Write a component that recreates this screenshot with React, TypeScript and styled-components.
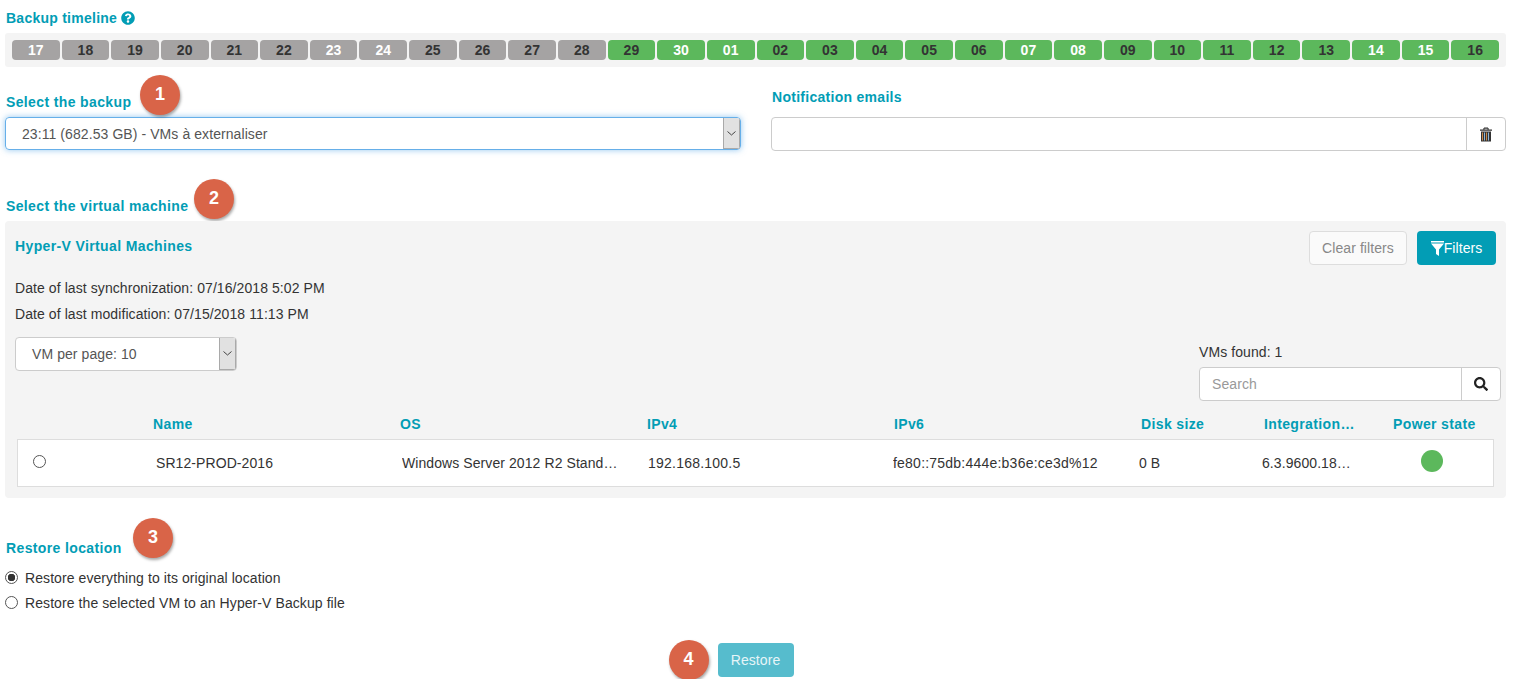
import styled, { createGlobalStyle } from 'styled-components';
import { FaQuestionCircle, FaSearch } from 'react-icons/fa';

const teal = '#029db5';
const days = [
  '17', '18', '19', '20', '21', '22', '23', '24', '25', '26', '27', '28', '29', '30', '01',
  '02', '03', '04', '05', '06', '07', '08', '09', '10', '11', '12', '13', '14', '15', '16',
];
const weekend = ['17', '23', '24', '30', '01', '07', '08', '14', '15'];
const firstGreen = 12;

const GlobalStyle = createGlobalStyle`
  html, body {
    margin: 0;
    background: #fff;
  }
  body {
    font-family: "Liberation Sans", Arial, sans-serif;
    font-size: 14px;
    letter-spacing: 0.08px;
    color: #333;
  }
`;

const Page = styled.div`
  width: 1519px;
  height: 679px;
  overflow: hidden;
  box-sizing: border-box;
  padding: 9px 13px 0 5px;
`;

const Label = styled.div`
  position: relative;
  display: inline-flex;
  align-items: center;
  gap: 6px;
  height: 18px;
  line-height: 18px;
  padding-left: 1px;
  font-size: 14px;
  font-weight: bold;
  letter-spacing: 0.37px;
  color: ${teal};
`;

const TimelineLabel = styled(Label)`
  gap: 4px;
  letter-spacing: 0.25px;
`;

const Badge = styled.span<{ $left: number; $top: number }>`
  position: absolute;
  left: ${props => props.$left}px;
  top: ${props => props.$top}px;
  width: 40px;
  height: 40px;
  border-radius: 50%;
  background: #d96448;
  box-shadow: 1px 2px 3px rgba(0, 0, 0, 0.35);
  color: #fff;
  font-size: 18px;
  font-weight: bold;
  letter-spacing: 0;
  line-height: 38px;
  text-align: center;
`;

const Timeline = styled.div`
  display: grid;
  grid-template-columns: repeat(30, 1fr);
  gap: 2px;
  margin-top: 6px;
  padding: 7px;
  height: 20px;
  background: #f4f4f4;
  border-radius: 3px;
`;

const Day = styled.div<{ $green: boolean; $light: boolean }>`
  height: 20px;
  line-height: 20px;
  border-radius: 4px;
  text-align: center;
  font-size: 14px;
  font-weight: bold;
  background: ${props => (props.$green ? '#5cb85c' : '#a5a3a3')};
  color: ${props => (props.$light ? '#fff' : '#333')};
`;

const TopRow = styled.div`
  display: grid;
  grid-template-columns: 736px 735px;
  column-gap: 30px;
  margin-top: 26px;
`;

const Field = styled.div`
  display: flex;
  flex-direction: column;
  align-items: flex-start;
`;

const Select = styled.div<{ $focus?: boolean; $width: number }>`
  display: flex;
  align-items: stretch;
  box-sizing: border-box;
  width: ${props => props.$width}px;
  height: ${props => (props.$focus ? 33 : 34)}px;
  background: #fff;
  border: 1px solid ${props => (props.$focus ? '#66afe9' : '#ccc')};
  border-radius: 4px;
  overflow: hidden;
`;

const SelectWrap = styled.div<{ $focus?: boolean }>`
  margin-top: ${props => (props.$focus ? 6 : 0)}px;
  border-radius: 4px;
  box-shadow: ${props => (props.$focus ? '0 0 6px rgba(102, 175, 233, 0.7)' : 'none')};
`;

const SelectText = styled.span`
  flex: 1;
  padding-left: 16px;
  line-height: 33px;
  color: #555;
`;

const SelectArrow = styled.span`
  display: flex;
  align-items: center;
  justify-content: center;
  width: 15px;
  background: #e1e1e1;
  border: 1px solid #a9a9a9;
  border-width: 0 1px 1px 1px;
`;

const InputGroup = styled.div<{ $width: number; $addon: number }>`
  display: grid;
  grid-template-columns: 1fr ${props => props.$addon}px;
  box-sizing: border-box;
  width: ${props => props.$width}px;
  height: 34px;
  background: #fff;
  border: 1px solid #ccc;
  border-radius: 4px;
`;

const Placeholder = styled.span`
  padding-left: 12px;
  line-height: 32px;
  color: #999;
`;

const Addon = styled.span`
  display: flex;
  align-items: center;
  justify-content: center;
  border-left: 1px solid #ccc;
  color: #222;
`;

const NotificationField = styled(Field)`
  margin-top: -5px;
`;

const NotificationLabel = styled(Label)`
  letter-spacing: 0.28px;
  margin-bottom: 11px;
`;

const SectionTitle = styled.div`
  margin-top: 46px;
`;

const Panel = styled.section`
  position: relative;
  margin-top: 6px;
  height: 277px;
  box-sizing: border-box;
  padding: 10px;
  background: #f4f4f4;
  border-radius: 4px;
`;

const PanelHead = styled.div`
  display: flex;
  justify-content: space-between;
  height: 34px;
`;

const PanelTitle = styled.h3`
  margin: 6px 0 0;
  font-size: 14px;
  line-height: 18px;
  font-weight: bold;
  letter-spacing: 0.37px;
  color: ${teal};
`;

const Actions = styled.div`
  display: flex;
  gap: 10px;
`;

const Button = styled.button<{ $variant: 'ghost' | 'primary' | 'restore' }>`
  display: inline-flex;
  align-items: center;
  justify-content: center;
  box-sizing: border-box;
  height: 34px;
  padding: 0;
  font-family: inherit;
  font-size: 14px;
  letter-spacing: inherit;
  border-radius: 4px;
  border: 1px solid ${props => (props.$variant === 'ghost' ? '#ddd' : 'transparent')};
  background: ${props =>
    props.$variant === 'ghost' ? '#fafafa' : props.$variant === 'primary' ? teal : '#56bccd'};
  color: ${props =>
    props.$variant === 'ghost' ? '#888' : props.$variant === 'restore' ? '#e6f5f8' : '#fff'};
`;

const ClearButton = styled(Button)`
  width: 98px;
`;

const FilterButton = styled(Button)`
  width: 79px;
`;

const InfoLine = styled.p`
  margin: 0;
  height: 26px;
  line-height: 26px;
`;

const InfoBlock = styled.div`
  margin-top: 10px;
`;

const ToolRow = styled.div`
  display: flex;
  justify-content: space-between;
  align-items: flex-start;
  height: 64px;
  margin-top: 10px;
`;

const SearchBox = styled.div`
  margin-right: -5px;
  margin-top: 7px;
`;

const FoundText = styled.div`
  height: 23px;
  line-height: 16px;
`;

const HeadRow = styled.div`
  display: grid;
  grid-template-columns: 138px 247px 247px 247px 247px 123px 129px 101px;
  margin-top: 14px;
  height: 18px;
  line-height: 18px;
  font-size: 14px;
  font-weight: bold;
  letter-spacing: 0.37px;
  color: ${teal};
  white-space: nowrap;
`;

const HeadCell = styled.span`
  overflow: hidden;
  text-overflow: ellipsis;
  padding-right: 20px;
`;

const IntegrationHead = styled(HeadCell)`
  padding-right: 37px;
`;

const PowerHead = styled.span`
  white-space: nowrap;
`;

const DataRow = styled.div`
  display: grid;
  grid-template-columns: 138px 246px 246px 245px 246px 123px 130px 1fr;
  align-items: center;
  box-sizing: border-box;
  width: 1477px;
  height: 48px;
  margin: 6px 0 0 2px;
  background: #fff;
  border: 1px solid #ddd;
`;

const Cell = styled.span`
  overflow: hidden;
  white-space: nowrap;
  text-overflow: ellipsis;
  padding-right: 28px;
`;

const NumberCell = styled(Cell)`
  letter-spacing: 0.22px;
`;

const IntegrationCell = styled(Cell)`
  padding-right: 38px;
`;

const RadioDot = styled.span<{ $checked?: boolean }>`
  display: inline-block;
  box-sizing: border-box;
  flex: none;
  width: 13px;
  height: 13px;
  border-radius: 50%;
  border: 1px solid #555;
  background: ${props => (props.$checked ? 'radial-gradient(circle, #333 0 3.5px, #fff 4px)' : '#fff')};
`;

const RowRadio = styled(RadioDot)`
  margin: -3px 0 0 15px;
`;

const PowerDot = styled.span`
  display: block;
  width: 22px;
  height: 22px;
  margin: -4px 0 0 29px;
  border-radius: 50%;
  background: #5cb85c;
`;

const RestoreSection = styled.div`
  margin-top: 41px;
`;

const RadioRow = styled.label`
  display: flex;
  align-items: center;
  gap: 7px;
  height: 25px;
`;

const RadioList = styled.div`
  margin-top: 8px;
`;

const Footer = styled.div`
  display: flex;
  justify-content: center;
  margin-top: 28px;
`;

const RestoreButton = styled(Button)`
  position: relative;
  width: 76px;
`;

const Trash = () => (
  <svg width="14" height="17" viewBox="0 0 14 16">
    <path d="M1 3h12v1.2H1zM5 1h4v1.2H5z M4.4 1.4h1v1.8h-1zM8.6 1.4h1v1.8h-1z" fill="#333" />
    <rect x="2" y="5" width="10" height="10" fill="#333" />
    <path d="M3.5 6v8" stroke="#c98a4b" strokeWidth="1" />
    <path d="M5.5 6v8" stroke="#8fb7d8" strokeWidth="1" />
    <path d="M7.5 6v8" stroke="#c98a4b" strokeWidth="1" />
    <path d="M9.5 6v8" stroke="#8fb7d8" strokeWidth="1" />
  </svg>
);

const Funnel = () => (
  <svg width="13" height="15" viewBox="0 0 13 15">
    <path d="M0 0h13v1.5H0z" fill="#fff" />
    <path d="M0 2.5h13L8 8.5V15L5 13V8.5z" fill="#fff" />
  </svg>
);

const Chevron = () => (
  <svg width="9" height="5" viewBox="0 0 9 5">
    <path d="M.5.5l4 3.5 4-3.5" fill="none" stroke="#444" strokeWidth="1" />
  </svg>
);

function App() {
  return (
    <>
      <GlobalStyle />
      <Page>
        <TimelineLabel>
          Backup timeline
          <FaQuestionCircle size={14} color={teal} />
        </TimelineLabel>
        <Timeline>
          {days.map((day, i) => (
            <Day key={day} $green={i >= firstGreen} $light={weekend.includes(day)}>
              {day}
            </Day>
          ))}
        </Timeline>

        <TopRow>
          <Field>
            <Label>
              Select the backup
              <Badge $left={135} $top={-18}>1</Badge>
            </Label>
            <SelectWrap $focus>
              <Select $focus $width={736}>
                <SelectText>23:11 (682.53 GB) - VMs à externaliser</SelectText>
                <SelectArrow>
                  <Chevron />
                </SelectArrow>
              </Select>
            </SelectWrap>
          </Field>
          <NotificationField>
            <NotificationLabel>Notification emails</NotificationLabel>
            <InputGroup $width={735} $addon={39}>
              <span />
              <Addon>
                <Trash />
              </Addon>
            </InputGroup>
          </NotificationField>
        </TopRow>

        <SectionTitle>
          <Label>
            Select the virtual machine
            <Badge $left={189} $top={-18}>2</Badge>
          </Label>
        </SectionTitle>
        <Panel>
          <PanelHead>
            <PanelTitle>Hyper-V Virtual Machines</PanelTitle>
            <Actions>
              <ClearButton $variant="ghost">Clear filters</ClearButton>
              <FilterButton $variant="primary">
                <Funnel />
                Filters
              </FilterButton>
            </Actions>
          </PanelHead>
          <InfoBlock>
            <InfoLine>Date of last synchronization: 07/16/2018 5:02 PM</InfoLine>
            <InfoLine>Date of last modification: 07/15/2018 11:13 PM</InfoLine>
          </InfoBlock>
          <ToolRow>
            <Select $width={222}>
              <SelectText>VM per page: 10</SelectText>
              <SelectArrow>
                <Chevron />
              </SelectArrow>
            </Select>
            <SearchBox>
              <FoundText>VMs found: 1</FoundText>
              <InputGroup $width={302} $addon={39}>
                <Placeholder>Search</Placeholder>
                <Addon>
                  <FaSearch size={14} />
                </Addon>
              </InputGroup>
            </SearchBox>
          </ToolRow>
          <HeadRow>
            <span />
            <HeadCell>Name</HeadCell>
            <HeadCell>OS</HeadCell>
            <HeadCell>IPv4</HeadCell>
            <HeadCell>IPv6</HeadCell>
            <HeadCell>Disk size</HeadCell>
            <IntegrationHead>Integration services</IntegrationHead>
            <PowerHead>Power state</PowerHead>
          </HeadRow>
          <DataRow>
            <RowRadio />
            <Cell>SR12-PROD-2016</Cell>
            <Cell>Windows Server 2012 R2 Standard</Cell>
            <NumberCell>192.168.100.5</NumberCell>
            <NumberCell>fe80::75db:444e:b36e:ce3d%12</NumberCell>
            <Cell>0 B</Cell>
            <IntegrationCell>6.3.9600.18692</IntegrationCell>
            <PowerDot />
          </DataRow>
        </Panel>

        <RestoreSection>
          <Label>
            Restore location
            <Badge $left={128} $top={-21}>3</Badge>
          </Label>
          <RadioList>
            <RadioRow>
              <RadioDot $checked />
              Restore everything to its original location
            </RadioRow>
            <RadioRow>
              <RadioDot />
              Restore the selected VM to an Hyper-V Backup file
            </RadioRow>
          </RadioList>
        </RestoreSection>

        <Footer>
          <RestoreButton $variant="restore">
            <Badge $left={-50} $top={-4}>4</Badge>
            Restore
          </RestoreButton>
        </Footer>
      </Page>
    </>
  );
}

export default App;
